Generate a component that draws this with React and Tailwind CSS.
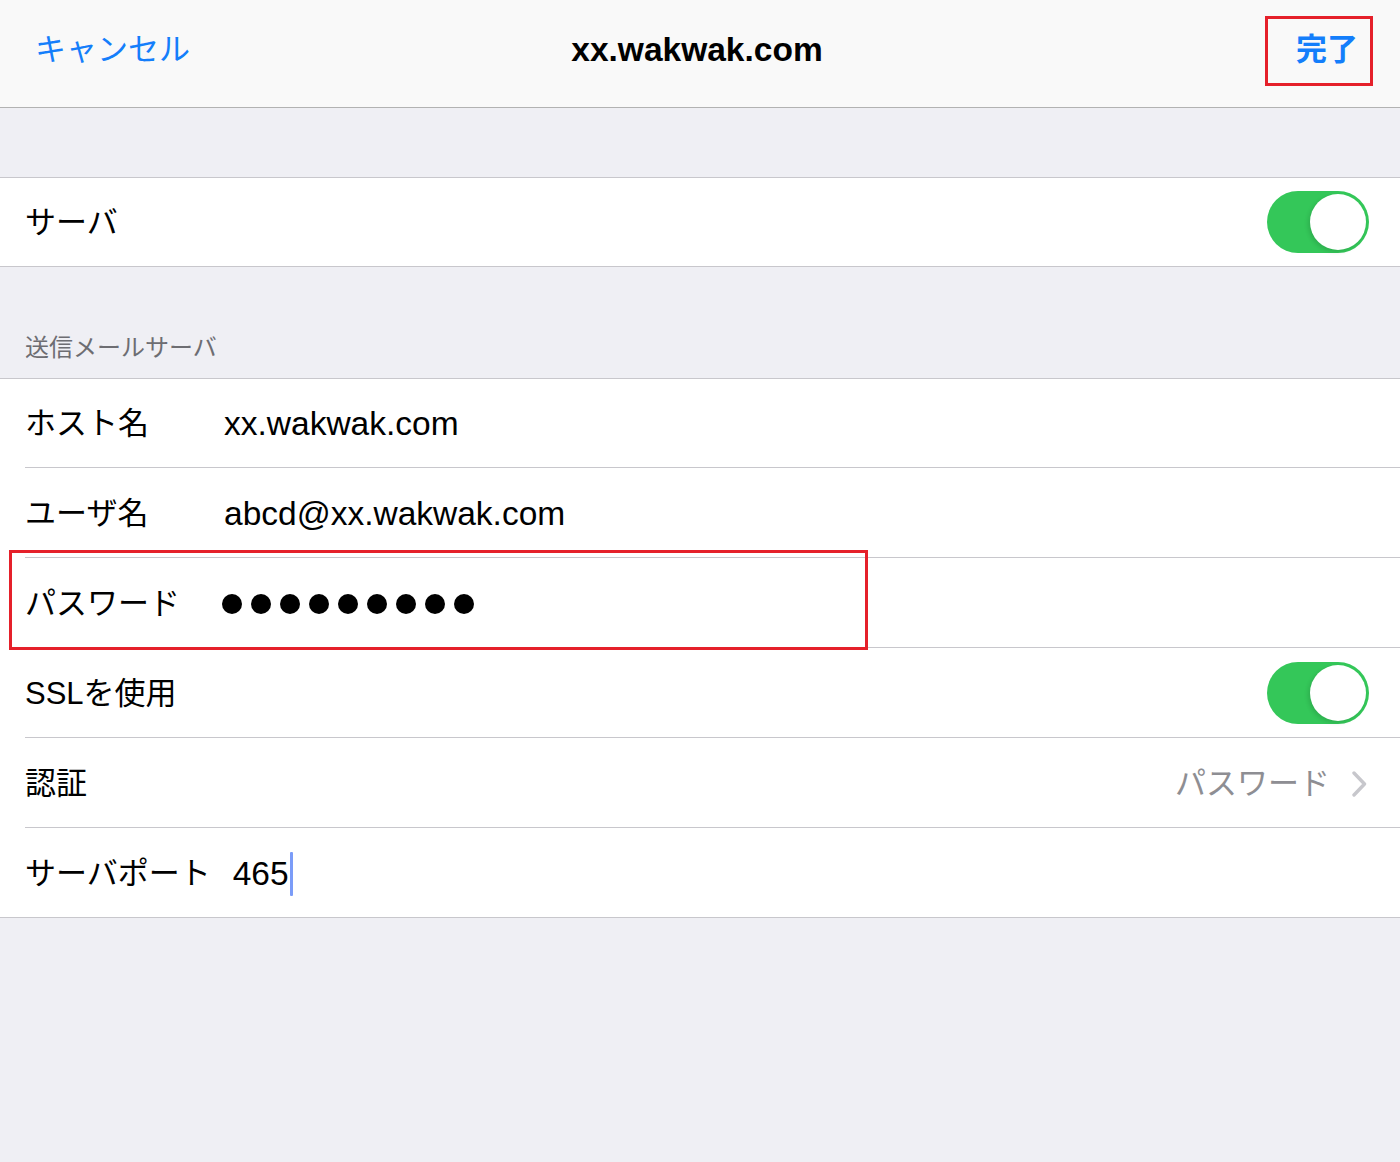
import React from "react";

const font = { fontFamily: '"Liberation Sans", "Noto Sans CJK JP", sans-serif' };

function Toggle() {
  return (
    <div className="relative h-[62px] w-[102px] rounded-full bg-[#34c759]">
      <div className="absolute right-[3px] top-[3px] h-[56px] w-[56px] rounded-full bg-white shadow-[-2px_2px_4px_rgba(0,0,0,0.12)]" />
    </div>
  );
}

function Row({ label, children, right, last, className = "h-[90px]" }) {
  return (
    <div className={`relative bg-white pl-[25px] ${className}`}>
      <div className={`flex h-full items-center ${last ? "" : "border-b border-[#c8c7cc]"}`}>
        {label && (
          <div className="min-w-[199px] shrink-0 pr-[22px] pt-[3px] text-[31px] text-black">{label}</div>
        )}
        <div className="flex flex-1 items-center pt-[3px] text-[33.5px] text-black">{children}</div>
        {right}
      </div>
    </div>
  );
}

export default function App() {
  return (
    <div className="h-[1162px] w-[1400px] bg-[#efeff4]" style={font}>
      {/* ナビゲーションバー */}
      <div className="grid h-[108px] grid-cols-[1fr_auto_1fr] items-center border-b border-[#b2b2b2] bg-[#f9f9f9] pb-[6px] pl-[35px] pr-[27px]">
        <div className="text-[31px] text-[#147efb]">キャンセル</div>
        <div className="mr-[14px] text-[33.5px] font-bold text-black">xx.wakwak.com</div>
        <div className="flex justify-end">
          <div className="flex h-[70px] items-center border-[3px] border-[#e5202a] pl-[28px] pr-[12px] text-[31px] font-bold text-[#147efb]">
            完了
          </div>
        </div>
      </div>

      <div className="h-[69px]" />

      <div className="border-y border-[#c8c7cc] bg-white">
        <div className="flex h-[88px] items-center justify-between pl-[25px] pr-[31px]">
          <div className="pt-[3px] text-[31px] text-black">サーバ</div>
          <Toggle />
        </div>
      </div>

      <div className="flex h-[111px] items-end pb-[12px] pl-[25px] text-[24px] text-[#6d6d72]">
        送信メールサーバ
      </div>

      <div className="border-y border-[#c8c7cc] bg-white">
        <Row label="ホスト名" className="h-[89px]">xx.wakwak.com</Row>
        <Row label="ユーザ名">abcd@xx.wakwak.com</Row>
        <Row label="パスワード">
          <div className="-ml-[2px] flex gap-[9px]">
            {Array.from({ length: 9 }).map((_, i) => (
              <div key={i} className="h-[20px] w-[20px] rounded-full bg-black" />
            ))}
          </div>
          <div className="pointer-events-none absolute left-[9px] top-[-8px] z-10 h-[100px] w-[859px] border-[3px] border-[#e5202a]" />
        </Row>
        <Row label="SSLを使用" right={<div className="pr-[31px]"><Toggle /></div>} />
        <Row
          label="認証"
          right={
            <div className="flex items-center gap-[22px] pr-[33px] pt-[3px]">
              <span className="text-[31px] text-[#8e8e93]">パスワード</span>
              <svg width="15" height="26" viewBox="0 0 15 26" fill="none">
                <path d="M2 2 L12.5 13 L2 24" stroke="#c7c7cc" strokeWidth="3.4" strokeLinecap="round" strokeLinejoin="round" />
              </svg>
            </div>
          }
        />
        <Row label="サーバポート" last className="h-[89px]">
          <span>465</span>
          <span className="ml-[1px] inline-block h-[44px] w-[3px] rounded-[1px] bg-[#7b9cf8]" />
        </Row>
      </div>
    </div>
  );
}
